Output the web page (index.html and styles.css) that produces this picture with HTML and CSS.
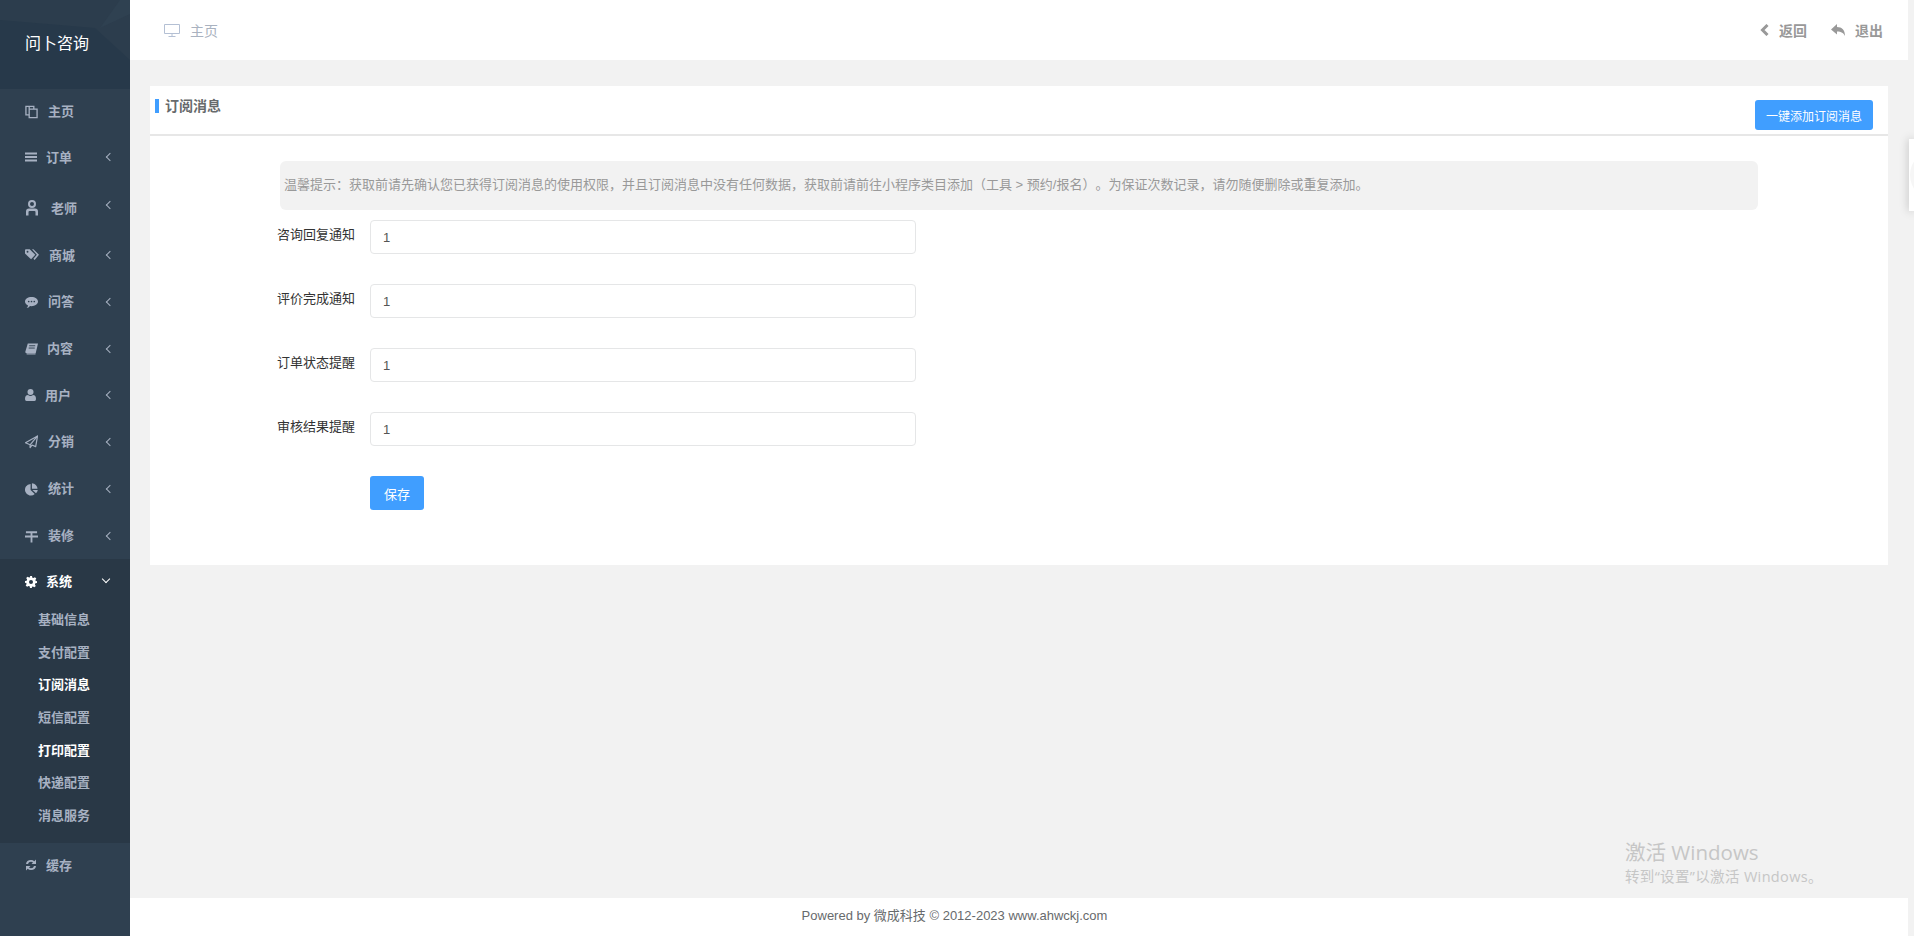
FILE: index.html
```html
<!DOCTYPE html>
<html lang="zh-CN">
  <head>
    <meta charset="UTF-8" />
    <title>订阅消息</title>
    <link rel="stylesheet" href="styles.css">
  </head>
  <body>
    <div class="layout">
      <!-- Sidebar -->
      <aside class="sidebar">
        <div class="logo">
          <svg class="logo-bg" viewBox="0 0 130 89" preserveAspectRatio="none">
            <polygon points="0,0 130,0 130,60 95,28 0,20" fill="#2c3d4d"/>
            <polygon points="120,0 130,0 130,14 100,28" fill="#2f4151"/>
          </svg>
          <span class="logo-text">问卜咨询</span>
        </div>
        <nav class="menu">
          <a class="menu-item h45">
            <svg class="ico" viewBox="0 0 14 14"><path d="M4.5 1H1v9h3M4.5 4H13v9H4.500zM4.500 4V1h5v3" fill="none" stroke="currentColor" stroke-width="1.4"/></svg>
            <span class="gap-10">主页</span>
          </a>
          <a class="menu-item h46">
            <svg class="ico w12" viewBox="0 0 12 14"><path d="M0 2.500h12v2H0zM0 6h12v2H0zM0 9.500h12v2H0z" fill="currentColor"/></svg>
            <span class="gap-9">订单</span><i class="arrow"></i>
          </a>
          <a class="menu-item h52 drop">
            <svg class="ico w14 tall" viewBox="0 0 14 16"><circle cx="7" cy="4" r="3" fill="none" stroke="currentColor" stroke-width="2"/><path d="M1 15.500v-4q0-3 3-3h6q3 0 3 3v4h-2.500v-3.500q0-1-1-1h-5q-1 0-1 1v3.500z" fill="currentColor"/></svg>
            <span class="gap-12">老师</span><i class="arrow up"></i>
          </a>
          <a class="menu-item h46">
            <svg class="ico w14" viewBox="0 0 15 13"><path d="M0 1.300Q0 .3 1 .3h4L11 6.300 6.500 11 0 5z" fill="currentColor"/><path d="M7.500.3H9l6 6-4.700 5.500-1.300-1.200 3.700-4.300z" fill="currentColor"/><circle cx="2.700" cy="3" r="1" fill="#2f4050"/></svg>
            <span class="gap-10">商城</span><i class="arrow"></i>
          </a>
          <a class="menu-item h47">
            <svg class="ico" viewBox="0 0 14 13"><path d="M7 1c3.900 0 7 2.200 7 5s-3.100 5-7 5q-.8 0-1.600-.1Q4 13 1.800 13q1.400-1.300 1.500-2.800C1.300 9.300 0 7.800 0 6c0-2.800 3.100-5 7-5z" fill="currentColor"/><circle cx="4" cy="6" r=".9" fill="#2f4050"/><circle cx="7" cy="6" r=".9" fill="#2f4050"/><circle cx="10" cy="6" r=".9" fill="#2f4050"/></svg>
            <span class="gap-10">问答</span><i class="arrow"></i>
          </a>
          <a class="menu-item h47">
            <svg class="ico" viewBox="0 0 14 13"><path d="M3 .5h11l-2.500 10.500H1.500Q0 11 .5 9z" fill="currentColor"/><path d="M1.800 11.800h9.500" stroke="currentColor" stroke-width="1.200"/><path d="M4.500 3H11M4 5.500h6.500" stroke="#2f4050"/></svg>
            <span class="gap-9">内容</span><i class="arrow"></i>
          </a>
          <a class="menu-item h46">
            <svg class="ico w11" viewBox="0 0 11 12"><circle cx="5.500" cy="3" r="3" fill="currentColor"/><path d="M0 10q0-4 3-4 1.200 1 2.500 1T8 6q3 0 3 4 0 2-1.500 2h-8Q0 12 0 10z" fill="currentColor"/></svg>
            <span class="gap-9">用户</span><i class="arrow"></i>
          </a>
          <a class="menu-item h47">
            <svg class="ico" viewBox="0 0 14 14"><path d="M13.500.5 11.500 12 7.500 10.300 5.500 13V10L.5 7.800z" fill="none" stroke="currentColor" stroke-width="1.300" stroke-linejoin="round"/><path d="M13.500.5 5.500 10" stroke="currentColor" stroke-width="1.300"/></svg>
            <span class="gap-10">分销</span><i class="arrow"></i>
          </a>
          <a class="menu-item h47">
            <svg class="ico" viewBox="0 0 14 14"><path d="M6 1.500V8l4.500 4.500A6.300 6.300 0 1 1 6 1.500z" fill="currentColor"/><path d="M7.500.8a6.300 6.300 0 0 1 6 6h-6z" fill="currentColor"/><path d="M8 8h5.800a6 6 0 0 1-2 3.600z" fill="currentColor"/></svg>
            <span class="gap-10">统计</span><i class="arrow"></i>
          </a>
          <a class="menu-item h47">
            <svg class="ico" viewBox="0 0 14 14"><path d="M1 2h12v2H1zM0 6.500h14v2H0zM6 2h2v12H6z" fill="currentColor"/></svg>
            <span class="gap-10">装修</span><i class="arrow"></i>
          </a>
          <div class="menu-group">
            <a class="menu-item h45 active">
              <svg class="ico w12" viewBox="0 0 24 24"><path d="M10 0h4l.7 3.300 2.200.9 2.900-1.800 2.800 2.800-1.800 2.900.9 2.200L24 10v4l-3.300.7-.9 2.200 1.800 2.900-2.800 2.800-2.900-1.800-2.200.9L14 24h-4l-.7-3.300-2.200-.9-2.900 1.800-2.800-2.800 1.800-2.900-.9-2.200L0 14v-4l3.300-.7.9-2.200-1.800-2.900 2.800-2.800 2.900 1.800 2.200-.9zM12 8a4 4 0 1 0 0 8 4 4 0 0 0 0-8z" fill="currentColor" fill-rule="evenodd"/></svg>
              <span class="gap-9">系统</span><i class="arrow down"></i>
            </a>
            <ul class="submenu">
              <li>基础信息</li>
              <li>支付配置</li>
              <li class="on">订阅消息</li>
              <li>短信配置</li>
              <li class="on">打印配置</li>
              <li>快递配置</li>
              <li>消息服务</li>
            </ul>
          </div>
          <a class="menu-item h45">
            <svg class="ico w12" viewBox="0 0 12 12"><path d="M1 5Q1.500 1 6 1q2 0 3.300 1.200L11 .5V5H6.500L8 3.500Q7.200 2.800 6 2.800 3.500 2.800 3 5zM11 7q-.5 4-5 4-2 0-3.300-1.200L1 11.500V7h4.500L4 8.500q.8.700 2 .7 2.500 0 3-2.200z" fill="currentColor"/></svg>
            <span class="gap-9">缓存</span>
          </a>
        </nav>
      </aside>

      <div class="main">
        <header class="topbar">
          <div class="crumb">
            <svg class="crumb-ico" viewBox="0 0 16 13"><path d="M.5.500h15v9H.5zM8 9.500v3M4.500 12.500h7" fill="none" stroke="currentColor"/></svg>
            <span>主页</span>
          </div>
          <div class="top-actions">
            <a class="top-link">
              <svg class="back-ico" viewBox="0 0 9 12"><path d="M7.500 1 2.500 6l5 5" fill="none" stroke="currentColor" stroke-width="3"/></svg>
              <span>返回</span>
            </a>
            <a class="top-link">
              <svg class="reply-ico" viewBox="0 0 14 12"><path d="M6 0v3c5 0 8 3 8 9-1.500-3-3.500-4.500-8-4.500v3L0 5.500z" fill="currentColor"/></svg>
              <span>退出</span>
            </a>
          </div>
        </header>

        <section class="content">
          <div class="card">
            <div class="card-head">
              <h3 class="card-title">订阅消息</h3>
              <button class="btn btn-add">一键添加订阅消息</button>
            </div>
            <div class="card-body">
              <p class="tips">温馨提示：获取前请先确认您已获得订阅消息的使用权限，并且订阅消息中没有任何数据，获取前请前往小程序类目添加（工具 &gt; 预约/报名）。为保证次数记录，请勿随便删除或重复添加。</p>
              <form class="form">
                <div class="form-row">
                  <label>咨询回复通知</label>
                  <input type="text" value="1" />
                </div>
                <div class="form-row">
                  <label>评价完成通知</label>
                  <input type="text" value="1" />
                </div>
                <div class="form-row">
                  <label>订单状态提醒</label>
                  <input type="text" value="1" />
                </div>
                <div class="form-row">
                  <label>审核结果提醒</label>
                  <input type="text" value="1" />
                </div>
                <div class="form-actions">
                  <button type="button" class="btn btn-save">保存</button>
                </div>
              </form>
            </div>
          </div>
        </section>

        <footer class="footer">Powered by 微成科技 © 2012-2023 www.ahwckj.com</footer>
      </div>
    </div>

    <div class="side-tab"></div>
    <div class="watermark">
      <div class="wm-title">激活 Windows</div>
      <div class="wm-sub">转到“设置”以激活 Windows。</div>
    </div>
  </body>
</html>
```

FILE: styles.css
```css
* { box-sizing: border-box; }
html, body {
  margin: 0;
  padding: 0;
  height: 100%;
  overflow: hidden;
  background: #f2f2f2;
  font-family: "Liberation Sans", "Noto Sans CJK SC", sans-serif;
  font-size: 13px;
  color: #676a6c;
  text-spacing-trim: space-all;
}
.layout { display: flex; height: 936px; }

/* Sidebar */
.sidebar {
  width: 130px;
  flex: none;
  background: #2f4050;
  color: #a7b1c2;
}
.logo {
  position: relative;
  height: 89px;
  background: #27394a;
  display: flex;
  align-items: center;
  padding: 0 0 6px 25px;
}
.logo-bg { position: absolute; left: 0; top: 0; width: 100%; height: 100%; }
.logo-text { position: relative; color: #fff; font-size: 16px; }
.menu-item {
  display: flex;
  align-items: center;
  padding-left: 25px;
  position: relative;
  font-weight: 700;
  color: #a7b1c2;
}
.menu-item span { margin-top: -2px; }
.h45 { height: 45px; }
.h46 { height: 46px; }
.h47 { height: 47px; }
.h52 { height: 52px; }
.drop { padding-top: 4px; }
.ico { width: 13px; height: 14px; flex: none; }
.ico.w11 { width: 11px; }
.ico.w12 { width: 12px; }
.ico.w14 { width: 14px; }
.ico.tall { height: 16px; }
.gap-9 { margin-left: 9px; }
.gap-10 { margin-left: 10px; }
.gap-12 { margin-left: 12px; }
.arrow {
  position: absolute;
  left: 107px;
  top: 50%;
  width: 6px;
  height: 6px;
  margin-top: -3px;
  border-left: 1.5px solid #a7b1c2;
  border-bottom: 1.5px solid #a7b1c2;
  transform: rotate(45deg);
}
.arrow.up { margin-top: -4px; }
.arrow.down {
  left: 103px;
  margin-top: -6px;
  border-color: #fff;
  transform: rotate(-45deg);
}
.menu-group { background: #293846; padding-bottom: 10px; }
.menu-item.active { color: #fff; }
.submenu { list-style: none; margin: 0; padding: 0; }
.submenu li {
  height: 32.7px;
  line-height: 32.7px;
  padding-left: 38px;
  font-weight: 700;
  color: #a7b1c2;
}
.submenu li.on { color: #fff; }

/* Main */
.main { flex: none; width: 1778px; display: flex; flex-direction: column; }
.topbar {
  height: 60px;
  flex: none;
  background: #fff;
  display: flex;
  justify-content: space-between;
  align-items: center;
  padding: 0 25px 0 34px;
  font-size: 14px;
}
.crumb { display: flex; align-items: center; color: #a9b2c0; }
.crumb-ico { width: 16px; height: 13px; margin-right: 10px; color: #b4c0d4; }
.top-actions { display: flex; gap: 24px; }
.top-link { display: flex; align-items: center; color: #999; font-weight: 700; }
.back-ico { width: 9px; height: 12px; margin-right: 10px; }
.reply-ico { width: 14px; height: 12px; margin-right: 10px; }
.content { flex: 1; padding: 26px 20px 0; }
.card { background: #fff; height: 479px; }
.card-head {
  height: 50px;
  border-bottom: 2px solid #e7e7e7;
  display: flex;
  justify-content: space-between;
  padding: 13px 15px 0 5px;
}
.card-title {
  margin: 0;
  height: 14px;
  line-height: 14px;
  padding-left: 6px;
  border-left: 4px solid #409eff;
  font-size: 14px;
  color: #676a6c;
}
.btn {
  border: none;
  border-radius: 3px;
  background: #409eff;
  color: #fff;
  font: inherit;
  padding: 0;
}
.btn-add { width: 118px; height: 30px; margin-top: 1px; font-size: 12px; }
.card-body { padding: 25px 0 0 130px; }
.tips {
  margin: 0 0 10px;
  width: 1478px;
  height: 49px;
  line-height: 47px;
  padding-left: 4px;
  background: #f2f2f2;
  border-radius: 6px;
  font-size: 13px;
  color: #999;
  white-space: nowrap;
}
.form { margin-left: -15px; }
.form-row { display: flex; align-items: flex-start; height: 64px; }
.form-row label {
  width: 105px;
  flex: none;
  padding: 6px 15px 0 0;
  line-height: 18px;
  text-align: right;
  white-space: nowrap;
  color: #333;
}
.form-row input {
  width: 546px;
  height: 34px;
  border: 1px solid #e5e6e7;
  border-radius: 4px;
  padding: 0 12px;
  font: inherit;
  color: #555;
  outline: none;
}
.form-actions { padding-left: 105px; }
.btn-save { width: 54px; height: 34px; }
.footer {
  height: 38px;
  flex: none;
  background: #fff;
  line-height: 36px;
  text-align: center;
  padding-right: 129px;
}

/* Overlays */
.side-tab {
  position: absolute;
  right: 0;
  top: 139px;
  width: 5px;
  height: 72px;
  overflow: hidden;
  background: #fff;
  box-shadow: 0 0 10px rgba(0, 0, 0, 0.25);
}
.side-tab::before {
  content: "";
  display: block;
  width: 50px;
  height: 50px;
  margin: 11px 0 0 1px;
  border-radius: 50%;
  background: #f6f6f6;
}
.watermark {
  position: absolute;
  left: 1625px;
  top: 840px;
  color: #c6c6c6;
  font-family: "Open Sans", "Noto Sans CJK SC", sans-serif;
}
.wm-title { font-size: 20.5px; line-height: 25px; }
.wm-sub { font-size: 14.5px; line-height: 24px; letter-spacing: 0.35px; }
```
